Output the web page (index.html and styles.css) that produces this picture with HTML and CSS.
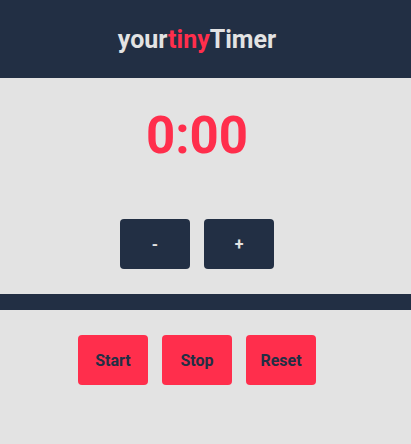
FILE: index.html
```html
<!DOCTYPE html>
<html>
<head>
<meta charset="utf-8">
<link rel="stylesheet" href="styles.css">
</head>
<body>
<header class="header">
  <h1 class="logo">your<span class="logo-accent">tiny</span>Timer</h1>
</header>
<main class="main">
  <div class="display">0:00</div>
  <div class="row adjust">
    <button class="btn btn-dark">-</button>
    <button class="btn btn-dark">+</button>
  </div>
  <div class="divider"></div>
  <div class="row controls">
    <button class="btn btn-red">Start</button>
    <button class="btn btn-red">Stop</button>
    <button class="btn btn-red">Reset</button>
  </div>
</main>
</body>
</html>
```

FILE: styles.css
```css
html, body {
  margin: 0;
  padding: 0;
  background: #e3e3e3;
  font-family: Roboto, "Liberation Sans", sans-serif;
}
.header {
  height: 78px;
  background: #222f44;
  display: flex;
  align-items: center;
  justify-content: center;
  padding-right: 17px;
}
.logo {
  margin: 0;
  font-size: 25px;
  font-weight: 700;
  color: #e3e3e3;
}
.logo-accent {
  color: #ff2e4c;
}
.main {
  display: flex;
  flex-direction: column;
}
.display {
  height: 110px;
  padding-top: 3px;
  line-height: 110px;
  text-align: center;
  font-size: 51px;
  font-weight: 700;
  color: #ff2e4c;
  padding-right: 17px;
}
.row {
  display: flex;
  justify-content: center;
  gap: 14px;
  padding-right: 17px;
}
.adjust {
  margin-top: 28px;
}
.btn {
  width: 70px;
  height: 50px;
  border: none;
  border-radius: 4px;
  font-family: Roboto, "Liberation Sans", sans-serif;
  font-size: 16px;
  font-weight: 700;
  padding: 0;
}
.btn-dark {
  background: #222f44;
  color: #e3e3e3;
}
.btn-red {
  background: #ff2e4c;
  color: #222f44;
}
.divider {
  height: 16px;
  background: #222f44;
  margin-top: 25px;
}
.controls {
  margin-top: 25px;
}
```
